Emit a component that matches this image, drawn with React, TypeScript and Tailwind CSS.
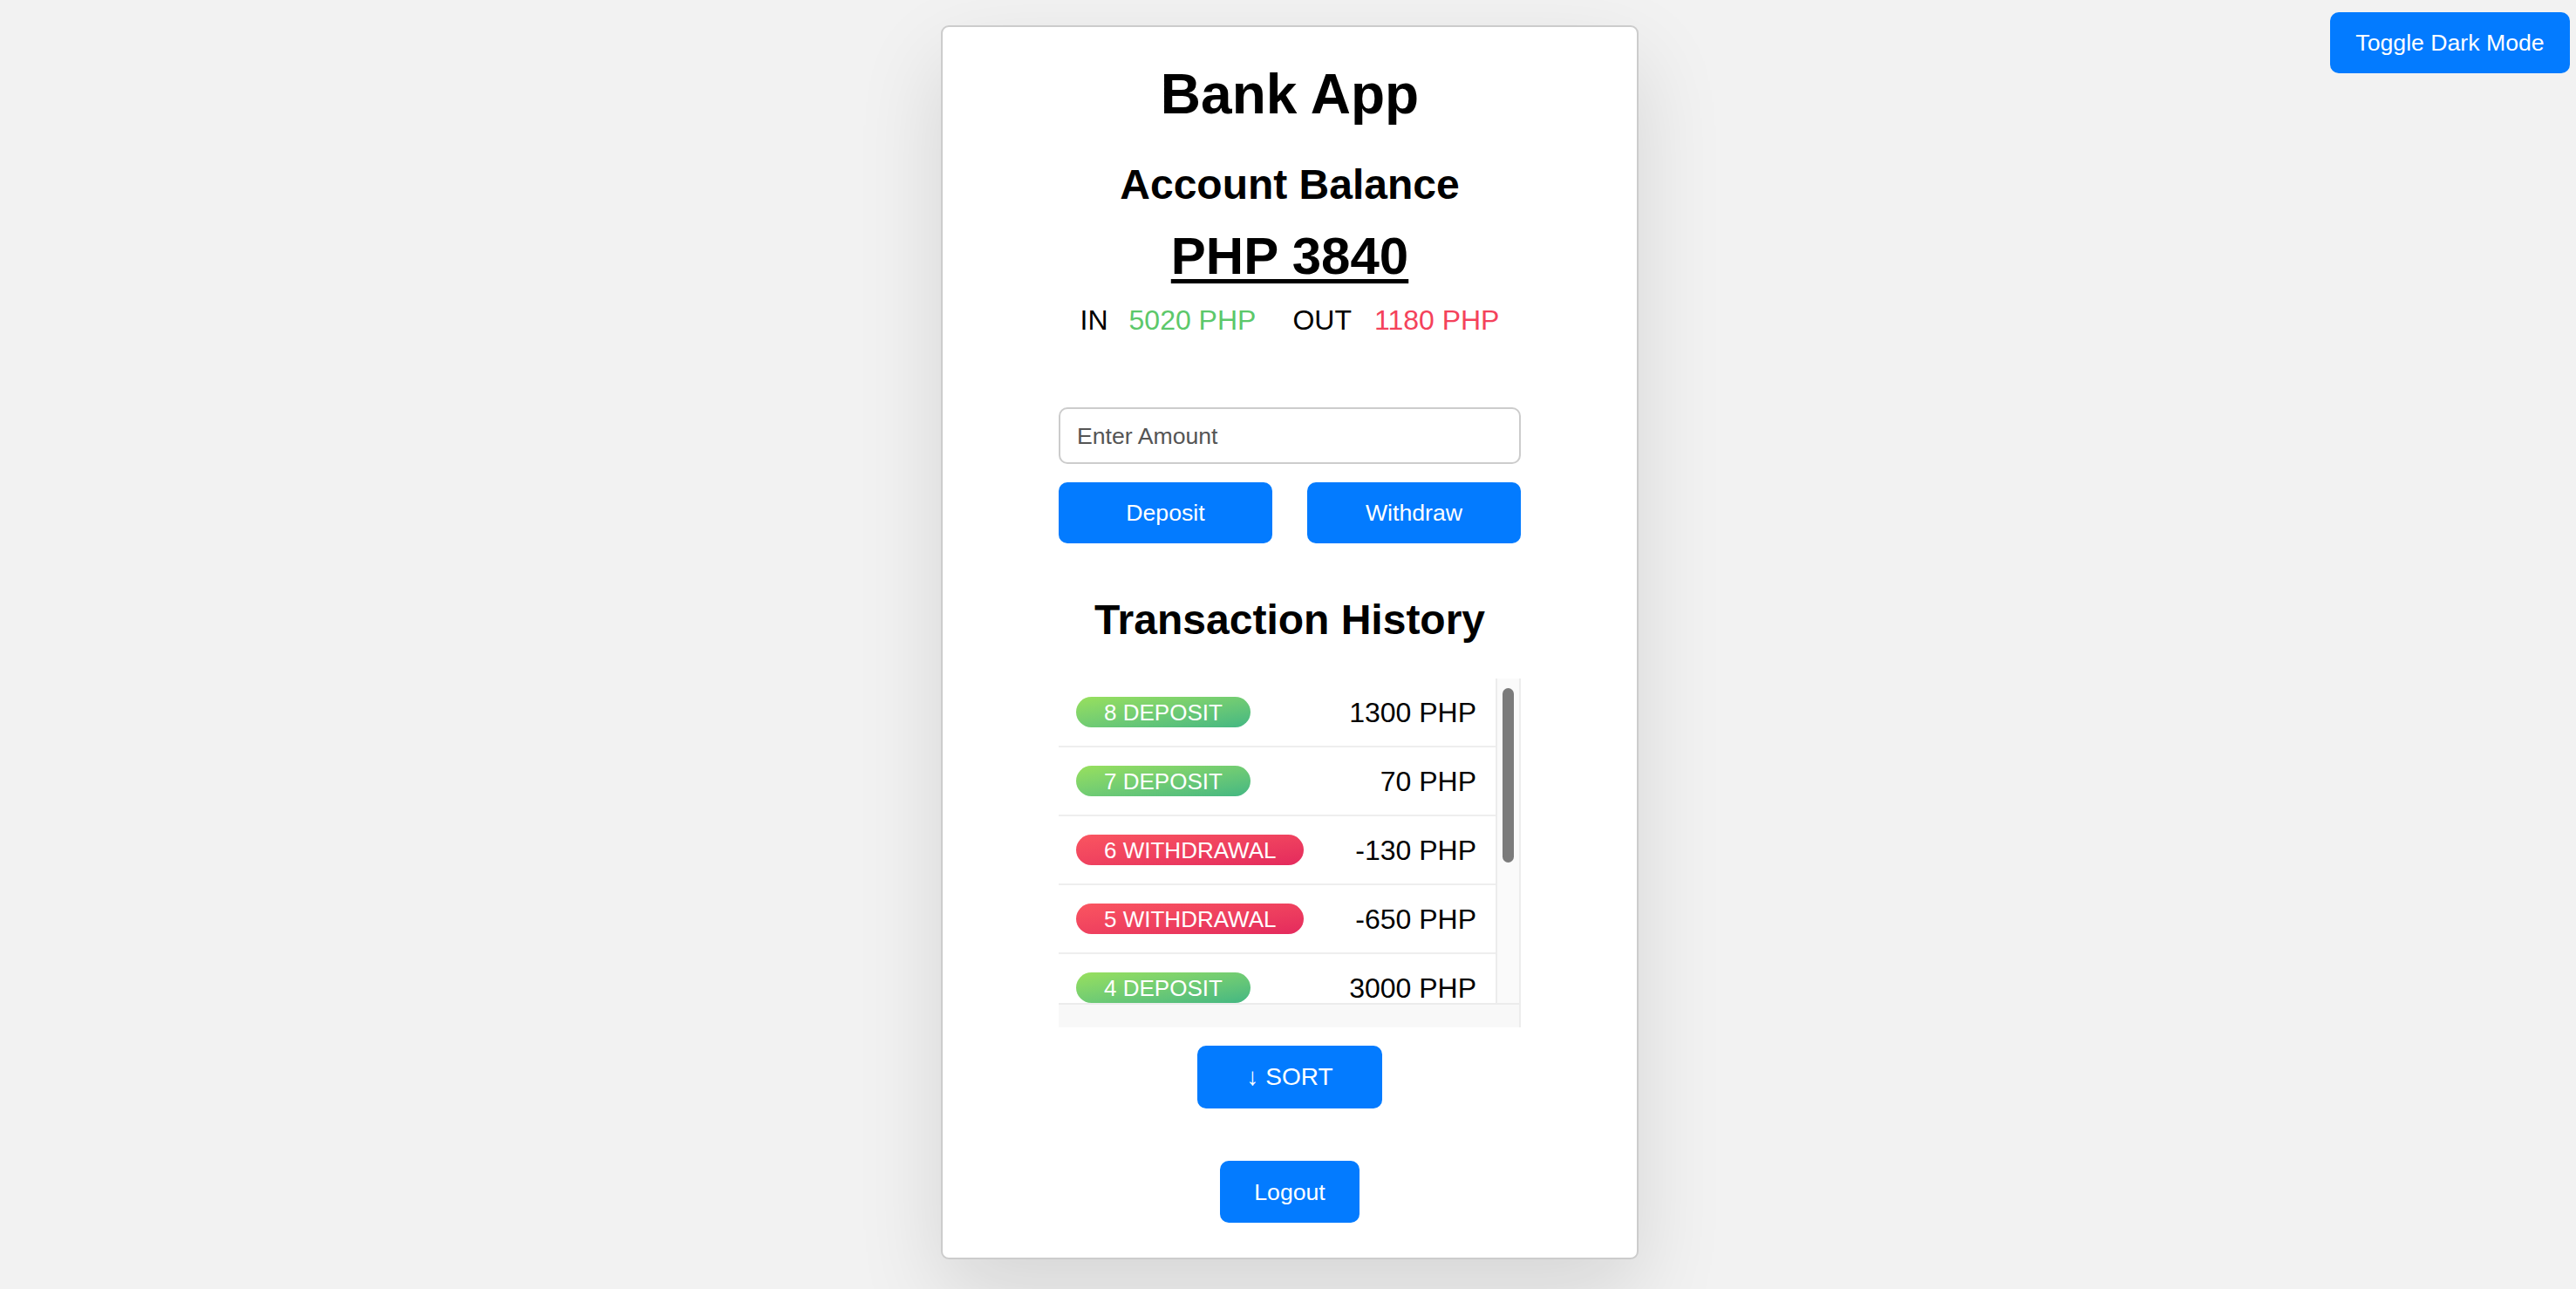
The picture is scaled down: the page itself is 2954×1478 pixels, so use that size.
import React from "react";

const font = { fontFamily: '"Liberation Sans", Arial, Helvetica, sans-serif' };

type Tx = { id: number; type: "DEPOSIT" | "WITHDRAWAL"; amount: number };

const txs: Tx[] = [
  { id: 8, type: "DEPOSIT", amount: 1300 },
  { id: 7, type: "DEPOSIT", amount: 70 },
  { id: 6, type: "WITHDRAWAL", amount: -130 },
  { id: 5, type: "WITHDRAWAL", amount: -650 },
  { id: 4, type: "DEPOSIT", amount: 3000 },
];

function Row({ tx }: { tx: Tx }) {
  const dep = tx.type === "DEPOSIT";
  return (
    <div className="flex h-[79px] shrink-0 items-center justify-between border-b-2 border-[#eeeeee] pl-[20px] pr-[22px]">
      <span
        className={
          "flex h-[35px] items-center rounded-full px-[32px] text-[26px] leading-none text-white " +
          (dep
            ? "bg-gradient-to-br from-[#98e05c] to-[#42b782]"
            : "bg-gradient-to-br from-[#fa5560] to-[#e4295d]")
        }
      >
        {tx.id} {tx.type}
      </span>
      <span className="text-[32px] leading-none text-black">{tx.amount} PHP</span>
    </div>
  );
}

export default function App() {
  return (
    <div
      className="relative h-[1478px] w-full overflow-hidden bg-[#f2f2f2]"
      style={font}
    >
      <button className="absolute right-[7px] top-[14px] h-[70px] w-[275px] rounded-[10px] bg-[#037bff] text-[26.67px] text-white">
        Toggle Dark Mode
      </button>

      <div className="mx-auto mt-[29px] flex w-[800px] translate-x-[2px] flex-col items-center rounded-[9px] border-2 border-[#cccccc] bg-white pb-[40px] pt-[45px] shadow-[0_40px_100px_rgba(0,0,0,0.12)]">
        <h1 className="text-[64px] font-bold leading-[64px] text-black">Bank App</h1>
        <h2 className="mt-[48px] text-[48px] font-bold leading-[48px] text-black">
          Account Balance
        </h2>
        <div className="mt-[28px] text-[60px] font-bold leading-[60px] text-black underline decoration-[5px] underline-offset-[6px]">
          PHP 3840
        </div>
        <div className="mt-[27px] flex items-center text-[32px] leading-[32px]">
          <span className="text-black">IN</span>
          <span className="ml-[24px] text-[#5cc86a]">5020 PHP</span>
          <span className="ml-[42px] text-black">OUT</span>
          <span className="ml-[26px] text-[#f4425b]">1180 PHP</span>
        </div>

        <div className="mt-[84px] flex h-[65px] w-[530px] items-center rounded-[10px] border-2 border-[#cccccc] pl-[19px] text-[26.67px] text-[#555555]">
          Enter Amount
        </div>
        <div className="mt-[21px] flex w-[530px] gap-[40px]">
          <button className="h-[70px] flex-1 rounded-[10px] bg-[#037bff] text-[26.67px] text-white">
            Deposit
          </button>
          <button className="h-[70px] flex-1 rounded-[10px] bg-[#037bff] text-[26.67px] text-white">
            Withdraw
          </button>
        </div>

        <h2 className="mt-[64px] text-[48px] font-bold leading-[48px] text-black">
          Transaction History
        </h2>

        <div className="mt-[43px] flex h-[400px] w-[530px] flex-col border-r-2 border-[#ececec] bg-[#f8f8f8]">
          <div className="flex h-[372px]">
            <div className="flex w-[501px] flex-col overflow-hidden bg-white">
              {txs.map((t) => (
                <Row key={t.id} tx={t} />
              ))}
            </div>
            <div className="flex flex-1 justify-center border-l-2 border-[#ececec] bg-[#fafafa] pt-[11px]">
              <div className="h-[200px] w-[13px] rounded-full bg-[#7b7b7b]" />
            </div>
          </div>
          <div className="flex-1 border-t-2 border-[#ececec] bg-[#f8f8f8]" />
        </div>

        <button className="mt-[21px] h-[72px] w-[212px] rounded-[10px] bg-[#037bff] text-[28px] text-white">
          ↓ SORT
        </button>

        <button className="mt-[60px] h-[71px] w-[160px] rounded-[10px] bg-[#037bff] text-[26.67px] text-white">
          Logout
        </button>
      </div>
    </div>
  );
}
